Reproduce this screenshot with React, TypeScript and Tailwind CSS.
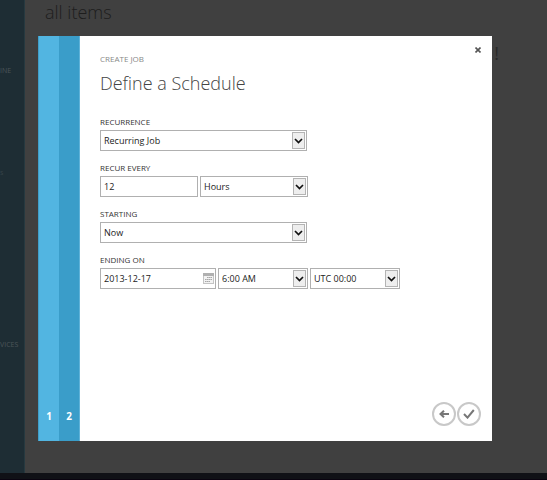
import type { ReactNode } from "react";

type SelectProps = { id: string; label?: string; value: string; className: string };

function Select({ id, label, value, className }: SelectProps) {
  return (
    <div className={`relative h-[21px] ${className}`}>
      <select
        id={id}
        aria-label={label}
        defaultValue={value}
        className="block h-full w-full appearance-none border border-[#b0b0b0] bg-white pl-[3px] pr-5 text-[9px] text-[#222]"
      >
        <option>{value}</option>
      </select>
      <span className="pointer-events-none absolute right-[2px] top-[2px] flex h-[17px] w-[13px] items-center justify-center border border-[#b4b4b4] bg-[#eeeeee]">
        <svg className="shrink-0" width="9" height="6" viewBox="0 0 9 6" fill="none" stroke="#111" strokeWidth="1.7">
          <path d="M1 1l3.5 3.5L8 1" />
        </svg>
      </span>
    </div>
  );
}

function Field({ id, label, children }: { id: string; label: string; children: ReactNode }) {
  return (
    <div className="flex flex-col gap-[3px]">
      <label htmlFor={id} className="text-[8px] leading-[10px] text-[#333]">
        {label}
      </label>
      <div className="flex gap-[2px]">{children}</div>
    </div>
  );
}

const inputClass = "block h-[21px] w-full border border-[#b0b0b0] bg-white pl-[3px] text-[9px] text-[#222]";

export default function App() {
  return (
    <div className="relative flex min-h-screen flex-col overflow-hidden bg-[#404040] font-['Open_Sans','Noto_Sans',sans-serif]">
      <div className="flex flex-1">
        <nav className="w-[25px] shrink-0 border-r border-[#263940] bg-[#1e2d34] pt-[66px] text-[7px] leading-[10px] text-[#4c5559]">
          <p>INE</p>
          <p className="mt-[92px] text-[#354248]">s</p>
          <p className="mt-[162px]">VICES</p>
        </nav>
        <main className="flex flex-1 justify-between pl-5 pr-[48px] text-[#1d1d1d]">
          <h1 className="text-[18px] leading-6 font-light">all items</h1>
          <p className="pt-[41px] text-[18px] leading-6 text-[#292929]">!</p>
        </main>
      </div>
      <footer className="h-[7px] border-b border-[#0a0410] bg-[#101116]" />

      <div className="absolute inset-0 flex pb-[39px] pl-[38px] pr-[55px] pt-9">
        <section role="dialog" aria-labelledby="dialog-title" className="flex flex-1 bg-white">
          <ol className="flex w-[42px] shrink-0 text-center text-[10px] leading-[14px] font-bold text-white">
            <li className="flex w-[21px] items-end justify-center border-l border-[#3f9fca] bg-[#52b5e1] pb-[18px]">1</li>
            <li className="flex w-[21px] items-end justify-center border-r border-[#5fb2d8] bg-[#3a9dc9] pb-[18px]">2</li>
          </ol>
          <div className="flex flex-1 flex-col pb-[15px] pl-5 pr-[11px] pt-2">
            <header className="flex items-start justify-between">
              <div className="pt-[10px]">
                <p className="text-[8px] leading-[10px] text-[#888]">CREATE JOB</p>
                <h2 id="dialog-title" className="mt-[7px] text-[18px] leading-6 font-light text-[#444]">
                  Define a Schedule
                </h2>
              </div>
              <button aria-label="Close" className="flex h-3 w-[6px] items-center justify-center">
                <svg width="6" height="6" viewBox="0 0 6 6" stroke="#555" strokeWidth="1.6">
                  <path d="M.5.5l5 5M5.5.5l-5 5" />
                </svg>
              </button>
            </header>

            <form className="mt-[22px] flex flex-col gap-3">
              <Field id="recurrence" label="RECURRENCE">
                <Select id="recurrence" value="Recurring Job" className="w-[207px]" />
              </Field>
              <Field id="every" label="RECUR EVERY">
                <div className="w-[98px]">
                  <input id="every" defaultValue="12" className={inputClass} />
                </div>
                <Select id="unit" label="Unit" value="Hours" className="w-[108px]" />
              </Field>
              <Field id="starting" label="STARTING">
                <Select id="starting" value="Now" className="w-[207px]" />
              </Field>
              <Field id="ending" label="ENDING ON">
                <div className="relative w-[116px]">
                  <input id="ending" defaultValue="2013-12-17" className={inputClass} />
                  <svg className="absolute right-[2px] top-[5px]" width="11" height="11" viewBox="0 0 11 11">
                    <rect x=".5" y=".5" width="10" height="10" fill="#f2f2f2" stroke="#c4c4c4" />
                    <path d="M0 0h11v3H0z" fill="#b0b0b0" />
                    <path d="M4 4.5h5M2 6.5h7M2 8.5h5" stroke="#a8a8a8" strokeDasharray="1.6 .4" />
                  </svg>
                </div>
                <Select id="time" label="Time" value="6:00 AM" className="w-[90px]" />
                <Select id="zone" label="Time zone" value="UTC 00:00" className="w-[90px]" />
              </Field>
            </form>

            <footer className="mt-auto flex justify-end gap-px">
              <button aria-label="Back" className="flex size-6 items-center justify-center rounded-full border-2 border-[#c8c8c8]">
                <svg width="10" height="8" viewBox="0 0 10 8" fill="none" stroke="#777" strokeWidth="2">
                  <path d="M10 4H1.5M5 .7L1.5 4 5 7.3" />
                </svg>
              </button>
              <button aria-label="Complete" className="flex size-6 items-center justify-center rounded-full border-2 border-[#c8c8c8]">
                <svg width="12" height="10" viewBox="0 0 12 10" fill="none" stroke="#777" strokeWidth="2">
                  <path d="M1 5l3.5 3.6L10.8 1" />
                </svg>
              </button>
            </footer>
          </div>
        </section>
      </div>
    </div>
  );
}
